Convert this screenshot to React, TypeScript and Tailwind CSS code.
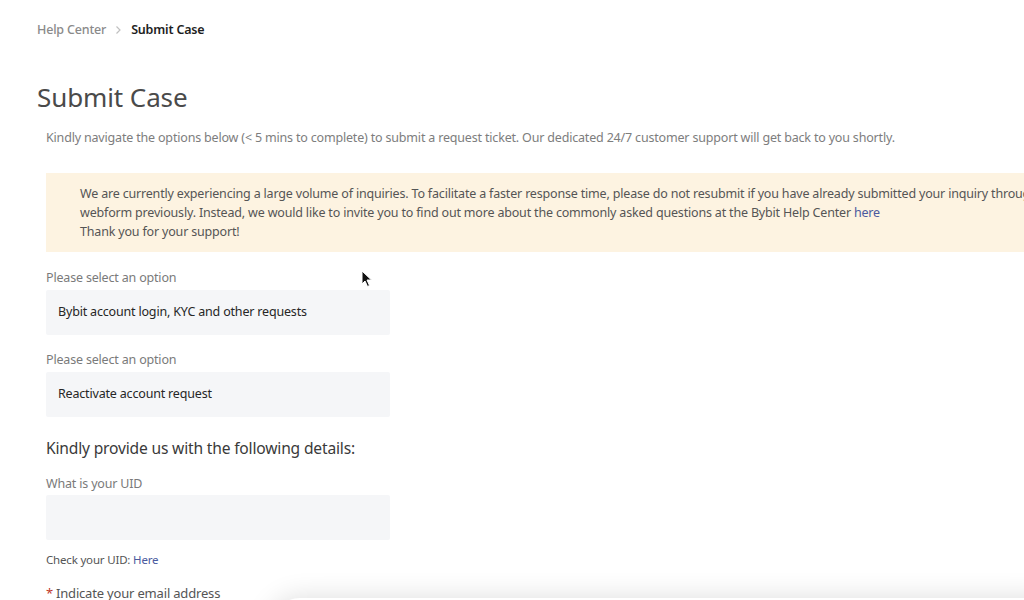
import React from "react";

function Cursor() {
  return (
    <svg width="12" height="18" viewBox="0 0 12 18" className="absolute left-[361px] top-[270px]">
      <path d="M1 1 L1 14 L4 11 L6.5 16.5 L8.5 15.5 L6 10 L10.5 10 Z" fill="#111" stroke="#fff" strokeWidth="1" />
    </svg>
  );
}

export default function App() {
  return (
    <div className="relative w-[1024px] h-[600px] overflow-hidden bg-white font-['Noto_Sans',sans-serif] tracking-[-0.18px]">
      <div className="pl-[37px] pt-[20px]">
        <div className="flex items-center text-[12.5px] leading-[20px] h-[20px]">
          <span className="text-[#8a8a8a] font-medium">Help Center</span>
          <span className="ml-[9px] mr-[9px] flex items-center">
            <svg width="7" height="10" viewBox="0 0 7 10"><path d="M1.5 1.5 L5 5 L1.5 8.5" fill="none" stroke="#c0c0c0" strokeWidth="1.2" /></svg>
          </span>
          <span className="text-[#1e1e1e] font-semibold">Submit Case</span>
        </div>
        <h1 className="mt-[40px] text-[26px] leading-[34px] text-[#4a4a4a] font-normal tracking-[-0.1px]">Submit Case</h1>
      </div>
      <div className="pl-[46px]">
        <p className="mt-[15px] text-[12.5px] leading-[18px] text-[#7d7d7d] whitespace-nowrap">
          Kindly navigate the options below (&lt; 5 mins to complete) to submit a request ticket. Our dedicated 24/7 customer support will get back to you shortly.
        </p>
        <div className="mt-[26px] h-[79px] bg-[#fdf3e1] pl-[34px] pt-[11px] text-[12.5px] leading-[19px] text-[#555555] whitespace-nowrap overflow-hidden">
          <div>We are currently experiencing a large volume of inquiries. To facilitate a faster response time, please do not resubmit if you have already submitted your inquiry through our</div>
          <div>webform previously. Instead, we would like to invite you to find out more about the commonly asked questions at the Bybit Help Center <span className="text-[#4b5a9e]">here</span></div>
          <div>Thank you for your support!</div>
        </div>
        <div className="mt-[17px] text-[12.5px] leading-[18px] text-[#7a7a7a]">Please select an option</div>
        <div className="mt-[3px] w-[344px] h-[45px] bg-[#f5f6f8] rounded-[2px] flex items-center pl-[12px] text-[12.5px] text-[#262626]">
          Bybit account login, KYC and other requests
        </div>
        <div className="mt-[16px] text-[12.5px] leading-[18px] text-[#7a7a7a]">Please select an option</div>
        <div className="mt-[3px] w-[344px] h-[45px] bg-[#f5f6f8] rounded-[2px] flex items-center pl-[12px] text-[12.5px] text-[#262626]">
          Reactivate account request
        </div>
        <div className="mt-[19px] text-[15.6px] leading-[24px] text-[#3a3a3a]">Kindly provide us with the following details:</div>
        <div className="mt-[15px] text-[12.5px] leading-[18px] text-[#7a7a7a]">What is your UID</div>
        <div className="mt-[2px] w-[344px] h-[45px] bg-[#f5f6f8] rounded-[2px]"></div>
        <div className="mt-[12px] text-[11.5px] leading-[16px] text-[#555555]">
          Check your UID: <span className="text-[#4b5a9e]">Here</span>
        </div>
        <div className="mt-[16px] text-[13px] leading-[18px] text-[#555555] flex">
          <span className="text-[#c0392b] mr-[3px]">*</span>Indicate your email address
        </div>
      </div>
      <div className="absolute left-[270px] right-[-40px] top-[598px] h-[60px] rounded-[30px] bg-white shadow-[0_0_28px_rgba(0,0,0,0.14)]"></div>
      <Cursor />
    </div>
  );
}
